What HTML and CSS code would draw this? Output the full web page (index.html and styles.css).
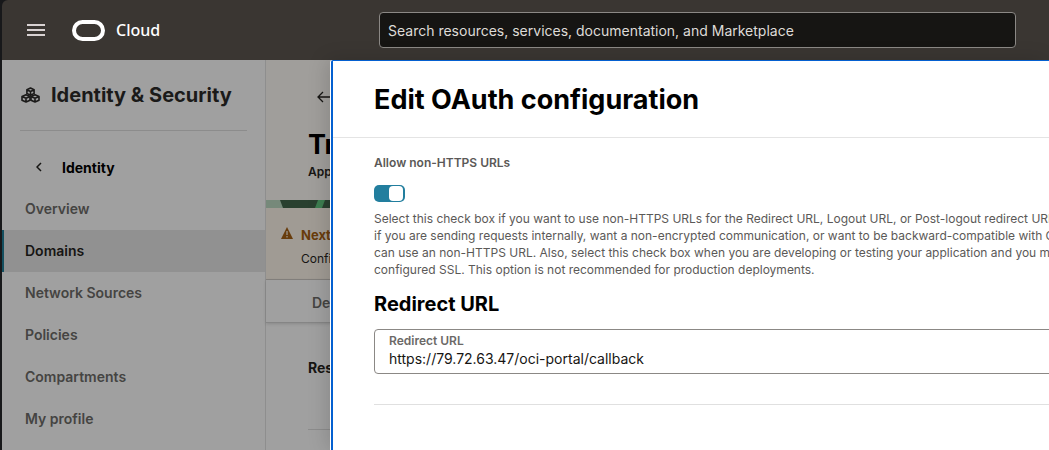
FILE: index.html
```html
<!DOCTYPE html>
<html lang="en">
<head>
  <meta charset="UTF-8">
  <meta name="viewport" content="width=device-width, initial-scale=1.0">
  <title>Edit OAuth configuration</title>
  <link rel="stylesheet" href="styles.css">
</head>
<body>
  <div class="app">
    <header class="topbar">
      <button class="menu-btn" type="button" aria-label="Navigation menu">
        <svg width="18" height="14" viewBox="0 0 18 14"><path d="M0 2h18M0 7h18M0 12h18" stroke="#d8d2d2" stroke-width="2"/></svg>
      </button>
      <a class="brand" href="#">
        <svg width="33" height="21" viewBox="0 0 33 21"><rect x="2" y="2" width="29" height="17" rx="8.5" fill="none" stroke="#fff" stroke-width="4"/></svg>
        <span>Cloud</span>
      </a>
      <input class="search" type="text" aria-label="Search" placeholder="Search resources, services, documentation, and Marketplace">
    </header>

    <div class="main">
      <aside class="sidebar">
        <div class="sidebar-title">
          <svg width="19" height="16" viewBox="0 0 19 16" fill="none" stroke="#1b1a19" stroke-width="1.6" stroke-linejoin="round">
            <path d="M9.5 1l3.6 1.8v3.6L9.5 8.2 5.9 6.4V2.8zM5.900 2.800l3.600 1.700 3.600-1.700M9.500 4.500v3.700"/>
            <path d="M5 7.800l4 1.800v3.600L5 15l-4-1.800V9.600zM1 9.600l4 1.700 4-1.700M5 11.300v3.700"/>
            <path d="M14 7.800l4 1.800v3.600L14 15l-4-1.800V9.600zM10 9.600l4 1.700 4-1.700M14 11.300v3.700"/>
          </svg>
          <h2>Identity &amp; Security</h2>
        </div>
        <a class="back" href="#">
          <svg width="6" height="10" viewBox="0 0 6 10"><path d="M5 1L1 5l4 4" fill="none" stroke="#161513" stroke-width="1.5"/></svg>
          <span>Identity</span>
        </a>
        <nav class="nav">
          <a href="#">Overview</a>
          <a href="#" class="active">Domains</a>
          <a href="#">Network Sources</a>
          <a href="#">Policies</a>
          <a href="#">Compartments</a>
          <a href="#">My profile</a>
        </nav>
      </aside>

      <section class="content">
        <div class="page-head">
          <a class="page-back" href="#" aria-label="Back">
            <svg width="16" height="12" viewBox="0 0 16 12"><path d="M16 6H1M6 1L1 6l5 5" fill="none" stroke="#161513" stroke-width="1.3"/></svg>
          </a>
          <h1>Tr</h1>
          <p>Application</p>
        </div>
        <svg class="stripe" height="8" viewBox="0 0 2000 8" preserveAspectRatio="xMinYMin slice">
          <path d="M0 0h2000v8H0z" fill="#76897a"/>
          <path d="M14 0h1986v8H17z" fill="#29402f"/>
          <path d="M52 0h7l-3 8h-7z" fill="#3d7e50"/>
        </svg>
        <div class="notice">
          <svg width="12" height="12" viewBox="0 0 12 12"><path d="M6 0l6 12H0z" fill="#683c0b"/><path d="M6 4v4M6 9v1.5" stroke="#a09b94" stroke-width="1.2"/></svg>
          <div>
            <strong>Next steps</strong>
            <p>Configure</p>
          </div>
        </div>
        <div class="tabs"><a href="#">Details</a></div>
        <div class="resources">
          <h3>Resources</h3>
        </div>
      </section>

      <div class="drawer" role="dialog" aria-labelledby="drawer-title">
        <h1 class="drawer-title" id="drawer-title">Edit OAuth configuration</h1>
        <form class="drawer-body">
          <label class="switch-label" for="nonHttps">Allow non-HTTPS URLs</label>
          <input class="switch" type="checkbox" id="nonHttps" checked>
          <p class="help">
            Select this check box if you want to use non-HTTPS URLs for the Redirect URL, Logout URL, or Post-logout redirect URL. For example,<br>
            if you are sending requests internally, want a non-encrypted communication, or want to be backward-compatible with OAuth 1.0, you<br>
            can use an non-HTTPS URL. Also, select this check box when you are developing or testing your application and you might not have<br>
            configured SSL. This option is not recommended for production deployments.
          </p>
          <h2>Redirect URL</h2>
          <div class="field">
            <label for="redirectUrl">Redirect URL</label>
            <input type="text" id="redirectUrl" value="https://79.72.63.47/oci-portal/callback">
          </div>
          <hr>
        </form>
      </div>
    </div>
  </div>
</body>
</html>
```
FILE: styles.css
```css
* {
  box-sizing: border-box;
}

body {
  margin: 0;
  background: #17181a;
  font-family: Inter, "Liberation Sans", sans-serif;
  color: #161513;
  overflow: hidden;
}

h1, h2, h3, p {
  margin: 0;
}

a {
  color: inherit;
  text-decoration: none;
}

.app {
  display: flex;
  flex-direction: column;
  min-height: 100vh;
  padding-left: 2px;
}

/* top bar */
.topbar {
  display: flex;
  align-items: center;
  height: 60px;
  padding: 0 33px 0 25px;
  background: #3a3632;
  border-top-left-radius: 6px;
}

.menu-btn {
  display: flex;
  padding: 0;
  border: none;
  background: none;
  cursor: pointer;
}

.brand {
  display: flex;
  align-items: center;
  gap: 11px;
  width: 307px;
  margin-left: 27px;
  color: #fff;
  font-family: "Noto Sans", sans-serif;
  font-size: 16px;
  font-weight: 500;
}

.search {
  flex: 1;
  height: 36px;
  padding: 0 8px;
  border: 1px solid #8b8885;
  border-radius: 4px;
  background: #161513;
  color: #e4e1dd;
  font-family: inherit;
  font-size: 14px;
}

.search::placeholder {
  color: #dedbd7;
  opacity: 1;
}

.main {
  position: relative;
  display: flex;
  flex: 1;
}

/* sidebar */
.sidebar {
  width: 264px;
  background: #a0a0a0;
  border-right: 1px solid #8e8e8e;
}

.sidebar-title {
  display: flex;
  align-items: center;
  gap: 11px;
  height: 71px;
  margin: 0 18px;
  padding-left: 1px;
  border-bottom: 1px solid #8c8c8c;
}

.sidebar-title h2 {
  font-size: 20px;
  font-weight: 700;
  color: #1b1a19;
}

.back {
  display: flex;
  align-items: center;
  gap: 20px;
  height: 42px;
  margin: 15px 0 0 34px;
  font-size: 14px;
  font-weight: 700;
  color: #000;
}

.nav a {
  display: block;
  height: 42px;
  padding-left: 21px;
  border-left: 2px solid transparent;
  font-size: 14px;
  font-weight: 600;
  line-height: 42px;
  color: #454442;
}

.nav .active {
  background: #919191;
  border-left-color: #144f5f;
  color: #161513;
}

/* page behind the drawer */
.content {
  flex: 1;
  background: #a0a0a0;
}

.page-head {
  height: 140px;
  padding: 31px 42px 0;
  background: #a09e9b;
}

.page-back {
  display: flex;
  align-items: flex-start;
  height: 36px;
  margin-left: 9px;
}

.page-head h1 {
  font-size: 27px;
  font-weight: 700;
  line-height: 36px;
  color: #000;
}

.page-head p {
  font-size: 12px;
  font-weight: 600;
  line-height: 18px;
}

.stripe {
  display: block;
  width: 100%;
}

.notice {
  display: flex;
  gap: 8px;
  height: 72px;
  padding: 16px 15px;
  background: #a09b94;
  border-bottom: 1px solid #85827e;
}

.notice svg {
  margin-top: 3px;
}

.notice strong {
  font-size: 13px;
  line-height: 18px;
  color: #683c0b;
}

.notice p {
  margin-top: 7px;
  font-size: 12px;
  line-height: 16px;
}

.tabs {
  height: 43px;
  padding-left: 46px;
  border-bottom: 1px solid #858585;
  box-shadow: 0 1px 3px rgba(0, 0, 0, 0.15);
  font-size: 14px;
  font-weight: 600;
  line-height: 46px;
  color: #454442;
}

.resources {
  height: 107px;
  margin-left: 42px;
  padding-top: 36px;
  border-bottom: 1px solid #8c8c8c;
}

.resources h3 {
  font-size: 14px;
  line-height: 18px;
}

/* drawer */
.drawer {
  position: absolute;
  top: 0;
  bottom: 0;
  left: 329px;
  right: 0;
  overflow: hidden;
  background: #fff;
  border-top: 1px solid #0460d0;
  border-left: 2px solid #0460d0;
  border-top-left-radius: 2px;
  box-shadow: -1px 0 0 #fff, -4px 0 20px rgba(0, 0, 0, 0.15);
}

.drawer-title {
  height: 77px;
  padding-left: 41px;
  border-bottom: 1px solid #e4e4e4;
  font-size: 27px;
  font-weight: 700;
  line-height: 77px;
  color: #000;
}

.drawer-body {
  margin-right: -40px;
  padding: 16px 0 0 41px;
}

.switch-label {
  display: block;
  font-size: 12px;
  font-weight: 600;
  line-height: 18px;
  color: #5b5957;
}

.switch {
  appearance: none;
  display: flex;
  justify-content: flex-end;
  width: 31px;
  height: 17px;
  margin: 13px 0 8px;
  padding: 1px 2px;
  border-radius: 5px;
  background: #227e9e;
  cursor: pointer;
}

.switch::before {
  content: "";
  width: 14px;
  border-radius: 4px;
  background: #fff;
}

.switch:not(:checked) {
  justify-content: flex-start;
  background: #8b8885;
}

.help {
  font-size: 12px;
  line-height: 17px;
  white-space: nowrap;
  color: #5b5957;
}

.drawer-body h2 {
  margin: 12px 0 11px;
  font-size: 20px;
  font-weight: 700;
  line-height: 28px;
  color: #000;
}

.field {
  display: flex;
  flex-direction: column;
  height: 45px;
  padding: 3px 14px;
  border: 1px solid #8b8885;
  border-radius: 4px;
}

.field label {
  font-size: 12px;
  font-weight: 600;
  line-height: 16px;
  color: #6b6967;
}

.field input {
  width: 100%;
  height: 18px;
  padding: 0;
  border: none;
  outline: none;
  font-family: inherit;
  font-size: 14px;
  color: #161513;
}

.drawer-body hr {
  margin: 30px 0 0;
  border: none;
  border-top: 1px solid #e0e0e0;
}
```
